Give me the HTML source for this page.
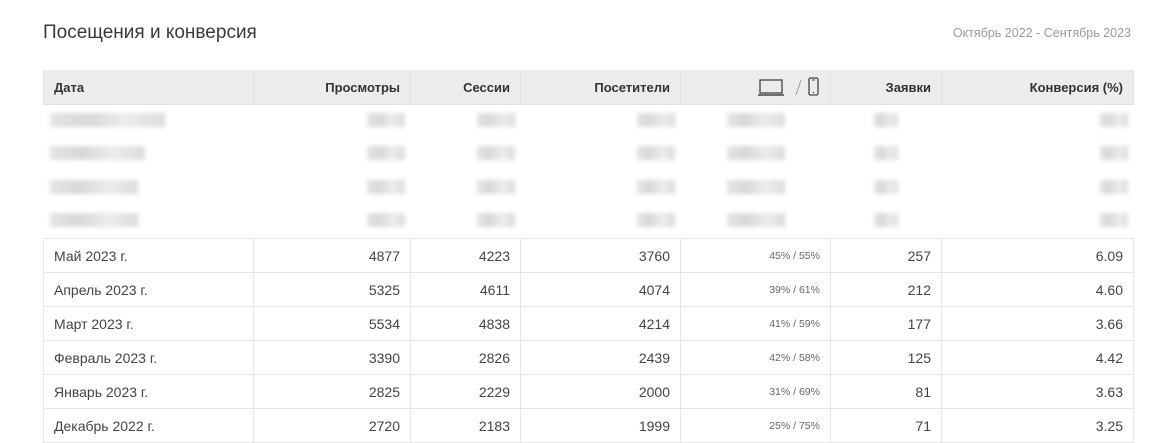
<!DOCTYPE html>
<html><head><meta charset="utf-8"><style>
body{margin:0;width:1176px;height:436px;overflow:hidden;background:#fff;font-family:"Liberation Sans","DejaVu Sans",sans-serif;color:#444;position:relative}
.t{position:absolute;left:43px;top:23px;font-size:19px;color:#3a3a3a;line-height:20px}
.d{position:absolute;right:45px;top:26px;font-size:12.5px;color:#9a9a9a;line-height:14px}
table{position:absolute;left:43px;top:70px;border-collapse:collapse;width:1090px;table-layout:fixed}
th{background:#ececec;height:34px;font-size:13px;font-weight:bold;color:#333;text-align:right;padding:0 10px;border:1px solid #e2e2e2;border-top:none}
td{height:34px;font-size:14px;color:#444;text-align:right;padding:0 10px;border:1px solid #e6e6e6;box-sizing:border-box}
th:first-child,td:first-child{text-align:left}
td.s{font-size:10.5px;color:#666}
tr.b td{border:none;height:33.5px;padding:0 6px}
.bl{display:inline-block;height:14px;background:linear-gradient(90deg,#e4e4e4,#d8d8d8,#ececec,#dcdcdc);filter:blur(2px)}
</style></head><body>
<div class="t">Посещения и конверсия</div>
<div class="d">Октябрь 2022 - Сентябрь 2023</div>
<table>
<colgroup><col style="width:210px"><col style="width:157px"><col style="width:110px"><col style="width:160px"><col style="width:150px"><col style="width:111px"><col style="width:192px"></colgroup>
<tr><th>Дата</th><th>Просмотры</th><th>Сессии</th><th>Посетители</th><th><svg width="62" height="22" viewBox="0 0 62 22" style="vertical-align:middle"><rect x="2" y="4" width="22" height="13" fill="none" stroke="#444" stroke-width="1.3"/><line x1="0" y1="19" x2="26" y2="19" stroke="#444" stroke-width="1.5"/><line x1="38" y1="19" x2="43" y2="4" stroke="#999" stroke-width="1"/><rect x="51" y="2" width="9" height="17" rx="1.5" fill="none" stroke="#444" stroke-width="1.3"/><line x1="54" y1="4" x2="57" y2="4" stroke="#444" stroke-width="1"/><circle cx="55.5" cy="16.5" r="0.7" fill="#444"/></svg></th><th>Заявки</th><th>Конверсия (%)</th></tr>
<tr class="b"><td><span class="bl" style="width:115px"></span></td><td><span class="bl" style="width:38px"></span></td><td><span class="bl" style="width:38px"></span></td><td><span class="bl" style="width:38px"></span></td><td style="text-align:center"><span class="bl" style="width:58px"></span></td><td style="text-align:center"><span class="bl" style="width:24px"></span></td><td><span class="bl" style="width:28px"></span></td></tr>
<tr class="b"><td><span class="bl" style="width:95px"></span></td><td><span class="bl" style="width:38px"></span></td><td><span class="bl" style="width:38px"></span></td><td><span class="bl" style="width:38px"></span></td><td style="text-align:center"><span class="bl" style="width:58px"></span></td><td style="text-align:center"><span class="bl" style="width:24px"></span></td><td><span class="bl" style="width:28px"></span></td></tr>
<tr class="b"><td><span class="bl" style="width:88px"></span></td><td><span class="bl" style="width:38px"></span></td><td><span class="bl" style="width:38px"></span></td><td><span class="bl" style="width:38px"></span></td><td style="text-align:center"><span class="bl" style="width:58px"></span></td><td style="text-align:center"><span class="bl" style="width:24px"></span></td><td><span class="bl" style="width:28px"></span></td></tr>
<tr class="b"><td><span class="bl" style="width:88px"></span></td><td><span class="bl" style="width:38px"></span></td><td><span class="bl" style="width:38px"></span></td><td><span class="bl" style="width:38px"></span></td><td style="text-align:center"><span class="bl" style="width:58px"></span></td><td style="text-align:center"><span class="bl" style="width:24px"></span></td><td><span class="bl" style="width:28px"></span></td></tr>
<tr><td>Май 2023 г.</td><td>4877</td><td>4223</td><td>3760</td><td class="s">45% / 55%</td><td>257</td><td>6.09</td></tr>
<tr><td>Апрель 2023 г.</td><td>5325</td><td>4611</td><td>4074</td><td class="s">39% / 61%</td><td>212</td><td>4.60</td></tr>
<tr><td>Март 2023 г.</td><td>5534</td><td>4838</td><td>4214</td><td class="s">41% / 59%</td><td>177</td><td>3.66</td></tr>
<tr><td>Февраль 2023 г.</td><td>3390</td><td>2826</td><td>2439</td><td class="s">42% / 58%</td><td>125</td><td>4.42</td></tr>
<tr><td>Январь 2023 г.</td><td>2825</td><td>2229</td><td>2000</td><td class="s">31% / 69%</td><td>81</td><td>3.63</td></tr>
<tr><td>Декабрь 2022 г.</td><td>2720</td><td>2183</td><td>1999</td><td class="s">25% / 75%</td><td>71</td><td>3.25</td></tr>
</table>
</body></html>
